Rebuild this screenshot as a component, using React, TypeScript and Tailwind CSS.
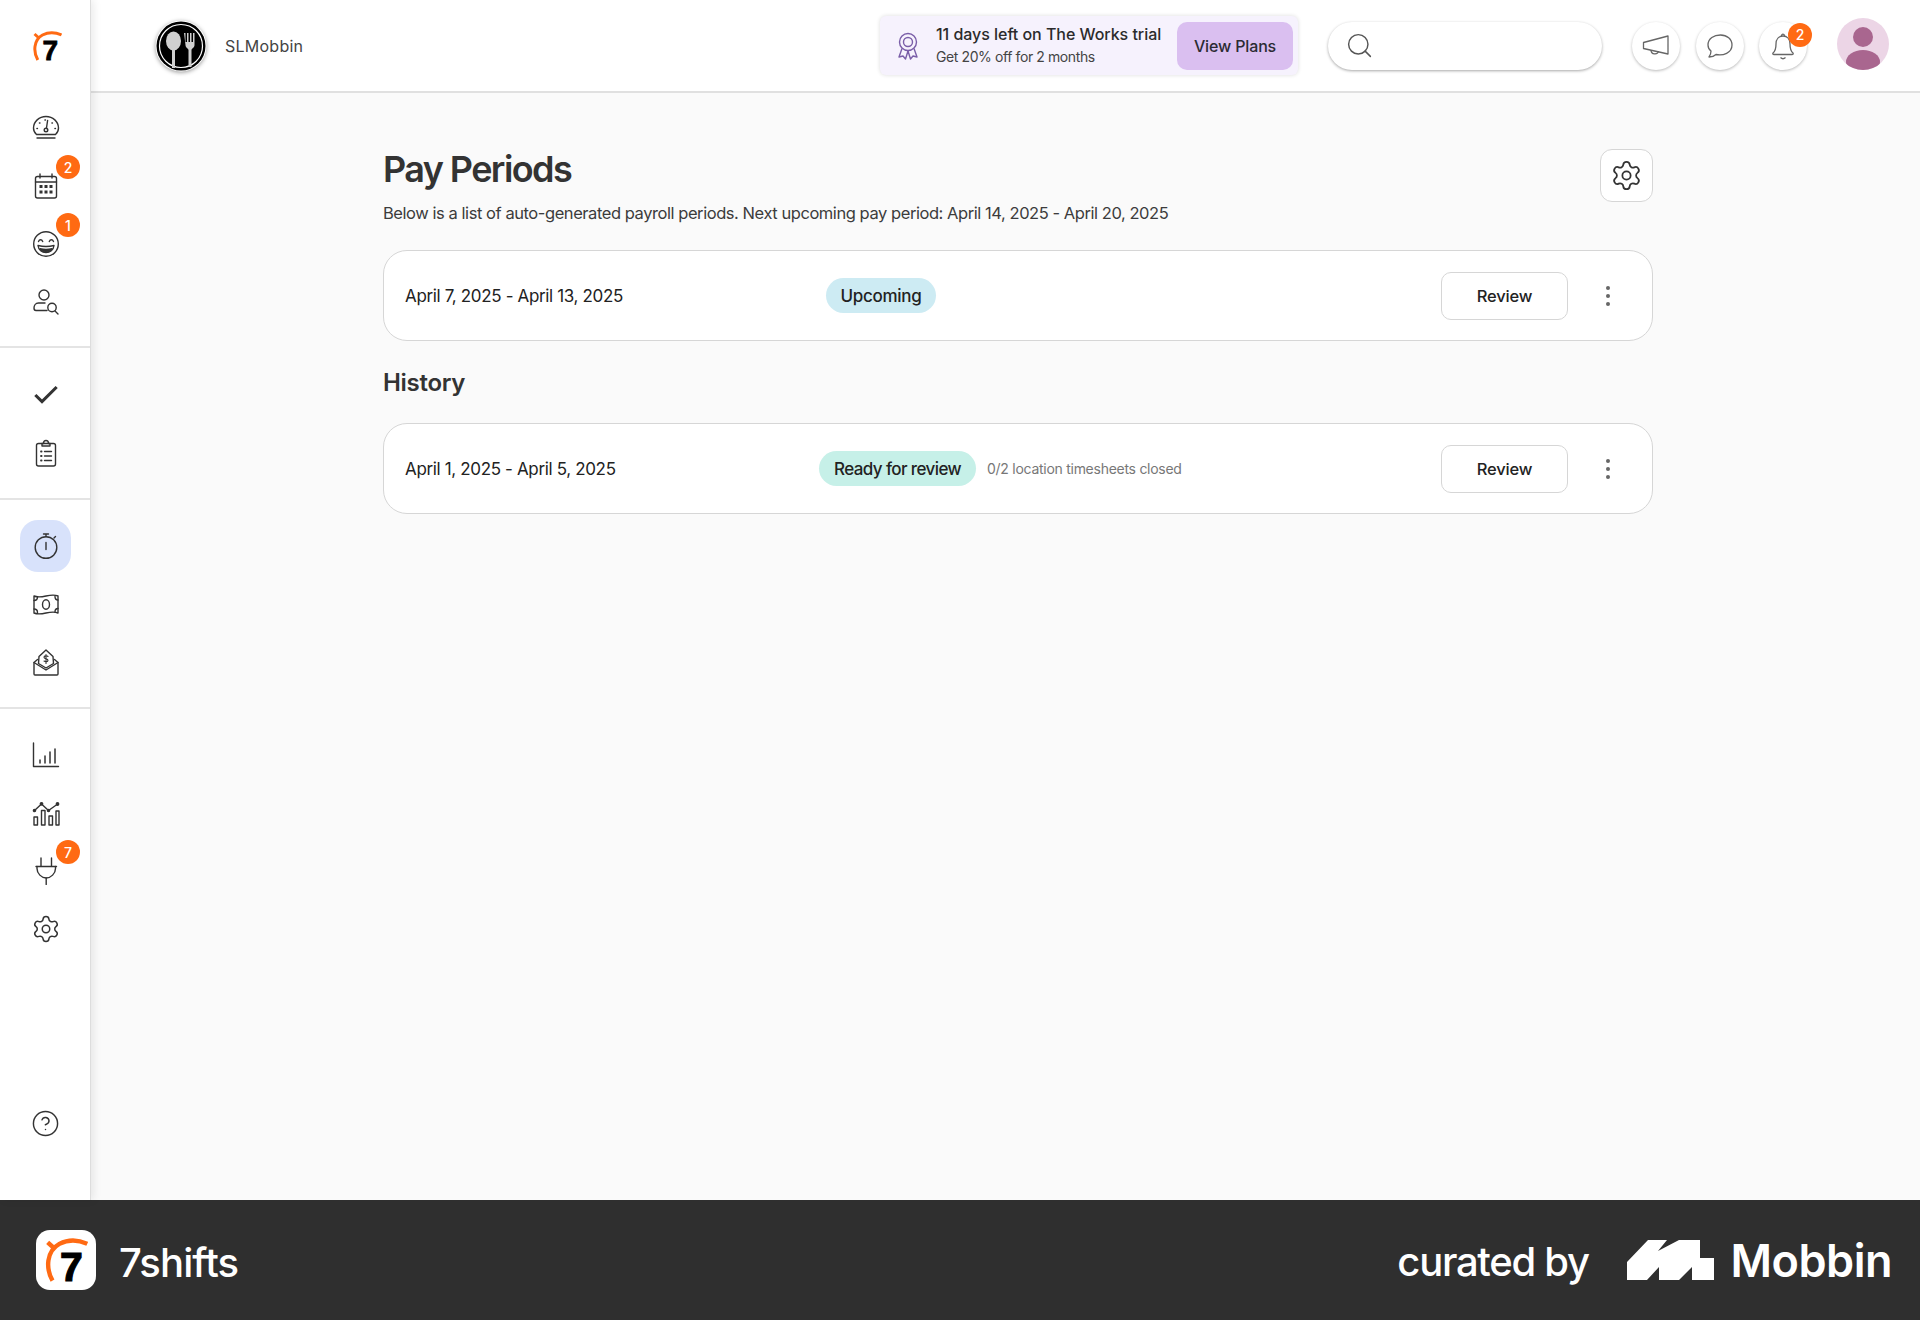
import * as React from "react";
import { Check, CircleHelp, Search, Settings } from "lucide-react";

const Ico = ({ children }: { children: React.ReactNode }) => (
    <svg width="28" height="28" viewBox="0 0 28 28" fill="none" stroke="#333333" strokeWidth="1.4" strokeLinecap="round" strokeLinejoin="round">
        {children}
    </svg>
);

const Logo = ({ size, sevenClass }: { size: number; sevenClass: string }) => (
    <div className="relative" style={{ width: size, height: size }}>
        <svg width={size} height={size} viewBox="0 0 30 30" fill="none">
            <path d="M5.8 29C1.2 21 1.400 9 10.500 4C16 1.200 23 1 29.500 4" stroke="#ff6a13" strokeWidth="3" />
            <path d="M2.500 3L7.500 7.500" stroke="#ff6a13" strokeWidth="3" />
        </svg>
        <span className={`absolute font-['Liberation_Sans',sans-serif] font-bold leading-none text-black ${sevenClass}`}>7</span>
    </div>
);

const navGroups: { pad: string; items: { icon: React.ReactNode; badge?: string; active?: boolean }[] }[] = [
    {
        pad: "pt-[18px] pb-[15px] border-b-2 border-[#e4e4e4]",
        items: [
            {
                icon: (
                    <Ico>
                        <path d="M4.500 20.500C2.600 18.800 1.500 16.500 1.500 14a12.500 11.500 0 0 1 25 0c0 2.500-1.100 4.800-3 6.500z" />
                        <path d="M5 24h18" />
                        <path d="M15.600 6.500l-1.200 8" />
                        <circle cx="14" cy="16" r="1.800" />
                        <path d="M5 14.500h.4M7.500 9h.4M13 6h.4M20 9h.4M23 14.500h.4" strokeWidth="1.600" />
                    </Ico>
                ),
            },
            {
                icon: (
                    <Ico>
                        <rect x="3.500" y="4.500" width="21" height="21.500" rx="2" />
                        <path d="M3.500 10h21M8 2v4M20 2v4" />
                        <path d="M7.500 14.500h3M12.500 14.500h3M17.500 14.500h3M7.500 20h3M12.500 20h3M17.500 20h3" strokeWidth="3" strokeLinecap="butt" />
                    </Ico>
                ),
                badge: "2",
            },
            {
                icon: (
                    <Ico>
                        <circle cx="14" cy="14" r="12.300" />
                        <path d="M6.500 11.500c1-2.400 3.200-2.400 4.200 0M17.300 11.500c1-2.400 3.200-2.400 4.200 0" />
                        <path d="M6 15.500c5 1.300 11 1.300 16 0-.5 4.500-4 7-8 7s-7.500-2.500-8-7z" />
                        <path d="M8 18.800c3.500.8 8.500.8 12 0-1 2-3.500 3.200-6 3.200s-5-1.200-6-3.200z" fill="#333333" />
                    </Ico>
                ),
                badge: "1",
            },
            {
                icon: (
                    <Ico>
                        <circle cx="12" cy="7" r="5" />
                        <path d="M13 15H6.500c-3 0-4.500 2.500-4.500 5 0 1.500.5 2.500 2 2.500h11" />
                        <circle cx="20" cy="19.500" r="4.200" />
                        <path d="M23 23l3 3" />
                    </Ico>
                ),
            },
        ],
    },
    {
        pad: "pt-[18px] pb-[16px] border-b-2 border-[#e4e4e4]",
        items: [
            { icon: <Check size={32} color="#333333" strokeWidth={2.3} strokeLinecap="butt" strokeLinejoin="miter" /> },
            {
                icon: (
                    <Ico>
                        <rect x="4.500" y="4.500" width="19" height="22.500" rx="2" />
                        <path d="M10 4.500h1.500c0-3 1.500-3 2.500-3s2.500 0 2.500 3H18v2.500H10z" />
                        <path d="M9 12.500h.6M9 17h.6M9 21.500h.6" strokeWidth="1.800" />
                        <path d="M12.500 12.500h7M12.500 17h7M12.500 21.500h7" />
                    </Ico>
                ),
            },
        ],
    },
    {
        pad: "pt-[17px] pb-[16px] border-b-2 border-[#e4e4e4]",
        items: [
            {
                icon: (
                    <Ico>
                        <circle cx="14" cy="15.500" r="10.800" />
                        <path d="M14 10.500v7M11.500 2h5M14 2v2.500M22 6l1.500-1.500" />
                    </Ico>
                ),
                active: true,
            },
            {
                icon: (
                    <Ico>
                        <path d="M2 6c8 3.500 16-3.500 24 0v17c-8-3.500-16 3.500-24 0z" />
                        <ellipse cx="14" cy="14.500" rx="3.500" ry="4.800" />
                        <path d="M2 10.500c2.500 0 3.500-1 3.500-3.500M26 10c-2 0-3-1-3-3.500M2 19c2.500 0 3.500 1 3.500 3.500M26 18.500c-2 0-3 1-3 3.500" />
                    </Ico>
                ),
            },
            {
                icon: (
                    <Ico>
                        <path d="M7 8.500l7-6.500 7 6.500 .5 7-7.500 4.500-7.500-4.500z" />
                        <path d="M5.500 11.500L2 14.500V26a1 1 0 0 0 1 1h22a1 1 0 0 0 1-1V14.500l-3.500-3" />
                        <path d="M2 14.500l12 7.500 12-7.500" />
                        <path d="M16 8.500c-1-1-4-1-4 .8s4 1 4 3-3 1.500-4 .7M14 6.500v9" strokeWidth="1.100" />
                    </Ico>
                ),
            },
        ],
    },
    {
        pad: "pt-[17px]",
        items: [
            {
                icon: (
                    <Ico>
                        <path d="M1.500 2v23.500h25" />
                        <path d="M8 19v3M13 15v7M18 11v11M23 8v14" strokeWidth="1.500" />
                    </Ico>
                ),
            },
            {
                icon: (
                    <Ico>
                        <rect x="2" y="18" width="3.500" height="8" />
                        <rect x="9.500" y="11.500" width="3.500" height="14.500" />
                        <rect x="17" y="17" width="3.500" height="9" />
                        <rect x="24" y="12" width="3" height="14" />
                        <path d="M2.500 11.500L9.500 5l7 6.500L25 5.500" />
                        <circle cx="2.500" cy="11.500" r="1.100" fill="#333333" />
                        <circle cx="9.500" cy="4.800" r="1.200" fill="#333333" />
                        <circle cx="16.500" cy="11.500" r="1.100" fill="#333333" />
                        <circle cx="25.500" cy="5" r="1.200" fill="#333333" />
                    </Ico>
                ),
            },
            {
                icon: (
                    <Ico>
                        <path d="M9 1v8M19.500 1v8M4 9.500h20.500" />
                        <path d="M5 9.500v2c0 5 4.500 9.500 9.200 9.500s9.300-4.500 9.300-9.500v-2" />
                        <path d="M14.200 21v6.500" />
                    </Ico>
                ),
                badge: "7",
            },
            { icon: <Settings size={30} color="#333333" strokeWidth={1.2} /> },
        ],
    },
];

const NavItem = ({ icon, badge, active }: { icon: React.ReactNode; badge?: string; active?: boolean }) => (
    <div className="relative flex h-[58px] items-center justify-center pl-[1px]">
        {active && <div className="absolute left-[20px] top-[3px] h-[52px] w-[51px] rounded-[18px] bg-[#d8e2fb]" />}
        <div className="relative flex items-center justify-center">{icon}</div>
        {badge && (
            <span className="absolute left-[56px] top-[-2px] flex h-[24px] w-[24px] items-center justify-center rounded-full bg-[#ff6a13] text-[14px] font-medium text-white">
                {badge}
            </span>
        )}
    </div>
);

const RoundBtn = ({ children, badge }: { children: React.ReactNode; badge?: string }) => (
    <div className="relative flex h-[48px] w-[48px] items-center justify-center rounded-full bg-white shadow-[0_1px_3px_rgba(0,0,0,0.28)]">
        {children}
        {badge && (
            <span className="absolute right-[-5px] top-[1px] flex h-[24px] w-[24px] items-center justify-center rounded-full bg-[#ff6a13] text-[14px] font-medium text-white">
                {badge}
            </span>
        )}
    </div>
);

const PeriodCard = ({ range, status, statusClass, note }: { range: string; status: string; statusClass: string; note?: string }) => (
    <div className="flex h-[91px] items-center rounded-[24px] border border-[#d6d6d6] bg-white pl-[21px] pr-[42px]">
        <div className="w-[400px] pt-[3px] text-[17px] tracking-[-0.35px] text-[#222222]">{range}</div>
        <div className={`flex h-[35px] items-center justify-center rounded-full pt-[2px] text-[17px] font-medium text-[#222222] ${statusClass}`}>
            {status}
        </div>
        {note && <div className="ml-[11px] text-[14px] tracking-[-0.27px] text-[#777777]">{note}</div>}
        <div className="ml-auto flex h-[48px] w-[127px] items-center justify-center rounded-[10px] border border-[#d6d6d6] bg-white pt-[1px] text-[16.500px] font-medium tracking-[-0.2px] text-[#222222]">
            Review
        </div>
        <div className="ml-[38px] flex flex-col gap-[4px]">
            <span className="h-[4px] w-[4px] rounded-full bg-[#666666]" />
            <span className="h-[4px] w-[4px] rounded-full bg-[#666666]" />
            <span className="h-[4px] w-[4px] rounded-full bg-[#666666]" />
        </div>
    </div>
);

const App = () => {
    return (
        <div className="flex h-[1320px] w-[1920px] flex-col overflow-hidden font-['Inter',sans-serif] text-[#333333]">
            <div className="flex h-[1200px]">
                {/* left rail */}
                <div className="z-10 flex w-[91px] shrink-0 flex-col border-r border-[#dddddd] bg-white shadow-[3px_0_8px_rgba(0,0,0,0.08)]">
                    <div className="flex h-[81px] shrink-0 items-center justify-center pl-[3px] pt-[11px]">
                        <Logo size={30} sevenClass="left-[11px] top-[6px] text-[28px] [-webkit-text-stroke:0.8px_black]" />
                    </div>
                    {navGroups.map((group, i) => (
                        <div key={i} className={group.pad}>
                            {group.items.map((item, j) => (
                                <NavItem key={j} {...item} />
                            ))}
                        </div>
                    ))}
                    <div className="mb-[62px] mt-auto flex justify-center pl-[1px]">
                        <CircleHelp size={29} color="#333333" strokeWidth={1.2} />
                    </div>
                </div>

                <div className="flex min-w-0 flex-1 flex-col bg-[#fafafa]">
                    {/* top bar */}
                    <div className="flex h-[93px] shrink-0 items-center border-b-2 border-[#e0e0e0] bg-white pl-[64px] pr-[31px]">
                        <svg width="52" height="52" viewBox="0 0 52 52" className="drop-shadow-[0_1px_2px_rgba(0,0,0,0.4)]">
                            <circle cx="26" cy="26" r="25.500" fill="#ffffff" />
                            <circle cx="26" cy="26" r="24.500" fill="#000000" />
                            <circle cx="26" cy="26" r="21.500" fill="none" stroke="#ffffff" strokeWidth="1.200" />
                            <ellipse cx="18.500" cy="21" rx="7.500" ry="9.500" fill="#d0d0d0" />
                            <rect x="17" y="28" width="3" height="20" fill="#d0d0d0" />
                            <path d="M29 13h1.500v9h1.500v-9h1.500v9h1.500v-9h1.500v9h1.500v-9h1.500v12c0 3-3 3.500-3 5v17h-3V30c0-1.500-3-2-3-5z" fill="#d0d0d0" />
                        </svg>
                        <div className="ml-[18px] text-[16px] tracking-[0.25px] text-[#444444]">SLMobbin</div>

                        <div className="ml-auto flex h-[59px] w-[418px] items-center rounded-[6px] bg-[#f6f2fd] pl-[17px] pr-[5px] shadow-[0_0_4px_rgba(0,0,0,0.14)]">
                            <svg width="22" height="28" viewBox="0 0 22 28" fill="none" stroke="#7a5ea8" strokeWidth="1.400" strokeLinejoin="round">
                                <circle cx="11" cy="10" r="8.500" />
                                <circle cx="11" cy="10" r="4.500" />
                                <path d="M5 16.500L2 25l4-1 2.500 3 2.500-8M17 16.500l3 8.500-4-1-2.500 3-2.500-8" />
                            </svg>
                            <div className="ml-[17px] flex flex-col">
                                <div className="text-[16px] font-medium leading-[22px] tracking-[-0.04px] text-[#2b2b2b]">11 days left on The Works trial</div>
                                <div className="text-[14px] leading-[23px] tracking-[-0.4px] text-[#444444]">Get 20% off for 2 months</div>
                            </div>
                            <div className="ml-auto flex h-[48px] w-[116px] items-center justify-center rounded-[10px] bg-[#dabff0] text-[16px] font-medium tracking-[-0.15px] text-[#2b2b33]">
                                View Plans
                            </div>
                        </div>

                        <div className="ml-[30px] flex h-[48px] w-[274px] items-center rounded-full bg-white pl-[17px] shadow-[0_1px_3px_rgba(0,0,0,0.35)]">
                            <Search size={29} color="#555555" strokeWidth={1.2} />
                        </div>

                        <div className="ml-[30px] flex gap-[15.500px]">
                            <RoundBtn>
                                <svg width="28" height="24" viewBox="0 0 28 24" fill="none" stroke="#666666" strokeWidth="1.300" strokeLinejoin="round">
                                    <path d="M1.500 8.500L26 2v18L1.500 14.500z" />
                                    <path d="M9 16c0 5 7 5 7.500 1" />
                                </svg>
                            </RoundBtn>
                            <RoundBtn>
                                <svg width="28" height="26" viewBox="0 0 28 26" fill="none" stroke="#666666" strokeWidth="1.300" strokeLinejoin="round">
                                    <path d="M14.500 2C8 2 2 5.500 2 12c0 2.500 1 4.500 3 6 0 2.500-.5 4-2 6 3 0 5.500-1 7-2.500 7 1.500 16-1.500 16-9.500 0-6-5-10-11.500-10z" />
                                </svg>
                            </RoundBtn>
                            <RoundBtn badge="2">
                                <svg width="26" height="28" viewBox="0 0 26 28" fill="none" stroke="#666666" strokeWidth="1.300" strokeLinejoin="round">
                                    <path d="M3 21c2.500-2 3-4 3-9 0-5 3-8 7-8s7 3 7 8c0 5 .5 7 3 9 .5 1 0 1.500-1 1.500H4c-1 0-1.500-.5-1-1.500z" />
                                    <path d="M11.500 4c0-2.500 3-2.500 3 0M10.500 25.500c1.500 1.500 3.500 1.500 5 0" />
                                </svg>
                            </RoundBtn>
                        </div>

                        <div className="mb-[4px] ml-[30px] h-[52px] w-[52px] shrink-0 overflow-hidden rounded-full bg-[#ecd5e6]">
                            <svg width="52" height="52" viewBox="0 0 52 52">
                                <circle cx="26" cy="19" r="10" fill="#a9668f" />
                                <ellipse cx="26" cy="44" rx="17" ry="12" fill="#a9668f" />
                            </svg>
                        </div>
                    </div>

                    {/* page body */}
                    <div className="w-[1562px] pl-[292px] pt-[54px]">
                        <div className="flex items-start justify-between">
                            <div>
                                <h1 className="text-[36px] font-semibold leading-[44px] tracking-[-1.600px] text-[#333333]">Pay Periods</h1>
                                <p className="mt-[12px] text-[16.500px] leading-[20px] tracking-[-0.44px] text-[#3c3c3c]">
                                    Below is a list of auto-generated payroll periods. Next upcoming pay period: April 14, 2025 - April 20, 2025
                                </p>
                            </div>
                            <div className="mt-[2px] flex h-[53px] w-[53px] items-center justify-center rounded-[12px] border border-[#d6d6d6] bg-white">
                                <Settings size={33} color="#333333" strokeWidth={1.3} />
                            </div>
                        </div>

                        <div className="mt-[27px]">
                            <PeriodCard range="April 7, 2025 - April 13, 2025" status="Upcoming" statusClass="ml-[21px] w-[110px] tracking-[-0.3px] bg-[#cdebf3]" />
                        </div>

                        <h2 className="mt-[26px] text-[24px] font-semibold leading-[32px] tracking-[-0.3px] text-[#333333]">History</h2>

                        <div className="mt-[24px]">
                            <PeriodCard
                                range="April 1, 2025 - April 5, 2025"
                                status="Ready for review"
                                statusClass="ml-[14px] w-[157px] tracking-[-0.6px] bg-[#c6f0e8]"
                                note="0/2 location timesheets closed"
                            />
                        </div>
                    </div>
                </div>
            </div>

            {/* footer */}
            <div className="flex h-[120px] shrink-0 items-center bg-[#2f2f2f] pl-[36px] pr-[28px] text-white">
                <div className="flex h-[60px] w-[60px] items-center justify-center rounded-[14px] bg-white">
                    <Logo size={44} sevenClass="left-[16px] top-[9px] text-[41px] [-webkit-text-stroke:1.200px_black]" />
                </div>
                <div className="ml-[23px] mt-[6px] text-[40px] font-medium tracking-[-0.9px]">7shifts</div>
                <div className="ml-auto mt-[4px] text-[40px] font-[450] tracking-[-1.300px]">curated by</div>
                <svg width="87" height="40" viewBox="0 0 87 40" className="ml-[38px]" fill="#ffffff">
                    <path d="M0 40V22L21 0h19L31 11 52 0h21v18h14v22H65V27L52 40H32V27L20 40z" />
                </svg>
                <div className="ml-[17px] mt-[1px] text-[45px] font-semibold tracking-[-0.5px]">Mobbin</div>
            </div>
        </div>
    );
};

export default App;
